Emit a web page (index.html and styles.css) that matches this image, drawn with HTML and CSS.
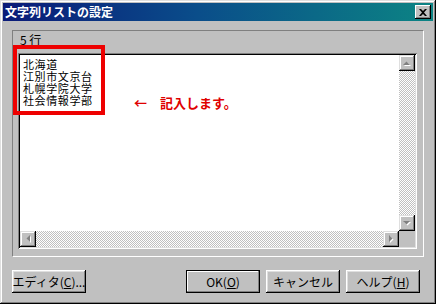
FILE: index.html
```html
<!DOCTYPE html>
<html lang="ja">
<head>
<meta charset="utf-8">
<title>文字列リストの設定</title>
<link rel="stylesheet" href="styles.css">
</head>
<body>
<div class="window">
  <div class="titlebar">
    <span class="title">文字列リストの設定</span>
    <button class="close" aria-label="閉じる">
      <svg width="8" height="7" viewBox="0 0 8 7"><path d="M0 0h2l2 2 2-2h2L5 3.5 8 7H6L4 5 2 7H0l3-3.5z" fill="#000"/></svg>
    </button>
  </div>
  <div class="frame">
    <div class="label">5 行</div>
    <div class="edit">
      <div class="text">
        <div class="line">北海道</div>
        <div class="line">江別市文京台</div>
        <div class="line">札幌学院大学</div>
        <div class="line">社会情報学部</div>
      </div>
      <div class="vscroll">
        <div class="sbtn"><svg width="8" height="5" viewBox="0 0 8 5"><path d="M1 5h7L4.5 1.5z" fill="#fff"/><path d="M0 4h7L3.5 0.5z" fill="#808080"/></svg></div>
        <div class="track"></div>
        <div class="sbtn"><svg width="8" height="5" viewBox="0 0 8 5"><path d="M1 1h7L4.5 4.5z" fill="#fff"/><path d="M0 0h7L3.5 3.5z" fill="#808080"/></svg></div>
      </div>
      <div class="hscroll">
        <div class="sbtn"><svg width="5" height="8" viewBox="0 0 5 8"><path d="M5 1v7L1.5 4.5z" fill="#fff"/><path d="M4 0v7L0.5 3.5z" fill="#808080"/></svg></div>
        <div class="track"></div>
        <div class="sbtn"><svg width="5" height="8" viewBox="0 0 5 8"><path d="M1 1v7l3.5-3.5z" fill="#fff"/><path d="M0 0v7l3.5-3.5z" fill="#808080"/></svg></div>
      </div>
      <div class="corner"></div>
    </div>
  </div>
  <div class="buttons">
    <button class="btn">エディタ(<u>C</u>)...</button>
    <span class="spacer"></span>
    <button class="btn default">OK(<u>O</u>)</button>
    <button class="btn">キャンセル</button>
    <button class="btn">ヘルプ(<u>H</u>)</button>
  </div>
  <div class="redbox"></div>
  <div class="note">←　記入します。</div>
</div>
</body>
</html>
```

FILE: styles.css
```css
* { box-sizing: border-box; }
html, body { margin: 0; padding: 0; }
body {
  width: 436px;
  height: 304px;
  background: #c0c0c0;
  font-family: "Noto Sans CJK JP", "Liberation Sans", sans-serif;
  font-size: 12px;
  color: #000;
  overflow: hidden;
}
.window {
  position: relative;
  width: 436px;
  height: 304px;
  background: #c0c0c0;
  padding: 3px 3px 0 3px;
  box-shadow: inset -1px -1px #000, inset 1px 1px #dfdfdf, inset -2px -2px #808080, inset 2px 2px #fff;
  display: flex;
  flex-direction: column;
}
.titlebar {
  height: 18px;
  background: linear-gradient(to right, #0a1a78, #0a4d8a 45%, #0c8484);
  display: flex;
  align-items: center;
  padding-left: 2px;
  padding-right: 2px;
}
.title {
  color: #fff;
  font-weight: bold;
  font-size: 12px;
  line-height: 18px;
  flex: 1;
}
.close {
  width: 16px;
  height: 14px;
  padding: 0;
  margin: 0;
  border: none;
  background: #c0c0c0;
  box-shadow: inset -1px -1px #000, inset 1px 1px #fff, inset -2px -2px #808080;
  display: flex;
  align-items: center;
  justify-content: center;
}
.frame {
  margin: 9px 9px 0 9px;
  height: 227px;
  border-top: 1px solid #808080;
  border-left: 1px solid #808080;
  border-right: 1px solid #fff;
  border-bottom: 1px solid #fff;
  display: flex;
  flex-direction: column;
  padding: 0 6px 7px 5px;
}
.label {
  font-size: 12px;
  line-height: 16px;
  padding: 1px 0 0 2px;
  height: 22px;
}
.edit {
  flex: 1;
  background: #fff;
  padding: 2px;
  box-shadow: inset 1px 1px #808080, inset -1px -1px #fff, inset 2px 2px #000, inset -2px -2px #dfdfdf;
  display: grid;
  grid-template-columns: 1fr 16px;
  grid-template-rows: 1fr 16px;
}
.text {
  padding: 3px 0 0 3px;
}
.line {
  height: 12px;
  line-height: 12px;
  font-size: 11px;
  letter-spacing: 0.6px;
  white-space: nowrap;
}
.vscroll {
  display: flex;
  flex-direction: column;
}
.hscroll {
  display: flex;
}
.track {
  flex: 1;
  background: repeating-conic-gradient(#c0c0c0 0 25%, #fff 0 50%) 0 0 / 2px 2px;
}
.sbtn {
  width: 16px;
  height: 16px;
  background: #c0c0c0;
  box-shadow: inset -1px -1px #000, inset 1px 1px #dfdfdf, inset -2px -2px #808080, inset 2px 2px #fff;
  display: flex;
  align-items: center;
  justify-content: center;
}
.corner { background: #c0c0c0; }
.buttons {
  display: flex;
  gap: 6px;
  margin: 13px 13px 0 9px;
}
.spacer { flex: 1; }
.btn {
  width: 74px;
  height: 23px;
  padding: 0;
  border: none;
  background: #c0c0c0;
  font-family: "Noto Sans CJK JP", "Liberation Sans", sans-serif;
  font-size: 12px;
  color: #000;
  box-shadow: inset -1px -1px #000, inset 1px 1px #fff, inset -2px -2px #808080, inset 2px 2px #dfdfdf;
}
.btn.default {
  box-shadow: inset 0 0 0 1px #000, inset -2px -2px #808080, inset 2px 2px #fff;
}
.btn u { text-decoration: underline; }
.redbox {
  position: absolute;
  left: 13px;
  top: 45px;
  width: 92px;
  height: 70px;
  border: 4px solid #ee0000;
}
.note {
  position: absolute;
  left: 134px;
  top: 95px;
  font-size: 13px;
  font-weight: bold;
  line-height: 16px;
  color: #e00000;
}
```
